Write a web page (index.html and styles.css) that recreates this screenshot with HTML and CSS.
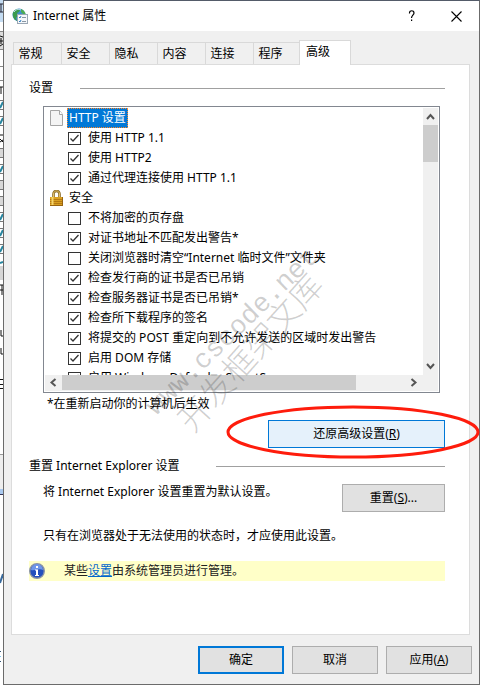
FILE: index.html
```html
<!DOCTYPE html>
<html lang="zh-CN">
<head>
<meta charset="utf-8">
<title>Internet 属性</title>
<link rel="stylesheet" href="styles.css">
</head>
<body>
<div class="desktop">
  <svg class="backdrop" width="3" height="685" aria-hidden="true">
    <rect width="3" height="685" fill="#fff"/>
    <rect width="3" height="22" fill="#c4dcf2"/>
    <path d="M0 4h3M1 4v8M0 12h3" stroke="#223" fill="none"/>
    <rect y="32" width="3" height="17" fill="#dcdcdc"/>
    <path d="M0 31.500h3M0 49.500h3M0 66.500h3M0 80.500h3" stroke="#888"/>
    <path d="M0 36l3 1M1 38v6M0 41h3M0 46l3-2M0 87h3M1 87v7M0 135h3M0 139l3 3M0 142l3-2" stroke="#111" fill="none"/>
    <path d="M0 148.500h3v9h-3zM0 180.500h3v9h-3zM0 196.500h3v9h-3z" fill="#d8d8d8"/>
    <path d="M0 100.500h3M0 109.500h3M0 116.500h3M0 125.500h3M0 148.500h3M0 157.500h3M0 164.500h3M0 173.500h3M0 180.500h3M0 189.500h3M0 196.500h3M0 205.500h3M0 212.500h3M0 221.500h3M0 228.500h3M0 237.500h3M0 244.500h3M0 253.500h3" stroke="#777"/>
    <path d="M0 108l3-6M0 124l3-6M0 172l3-6M0 220l3-6M0 236l3-6M0 252l3-6M0 263l3-1" stroke="#26859f" stroke-width="2"/>
    <rect y="266" width="3" height="14" fill="#d6d6d6"/>
    <path d="M0 285h3M2 285v10M0 290h3M1 330v6h2M1 348v6h2M0 379.500h3M0 384.500h3M0 388.500h3" stroke="#111" fill="none"/>
    <rect y="454" width="3" height="36" fill="#eee"/>
    <path d="M0 454.500h3" stroke="#999"/>
    <rect y="489" width="3" height="5" fill="#a9c9ef"/>
    <path d="M0 494.500h3" stroke="#335"/>
    <path d="M0 583l3-9" stroke="#37699c" stroke-width="2"/>
    <path d="M0 651.500h1M0 661.500h1" stroke="#357"/>
    <path d="M0 656.500h1" stroke="#7cc4ee"/>
  </svg>

  <main class="dialog">
    <header class="titlebar">
      <svg class="app-icon" width="16" height="16" viewBox="0 0 16 16" aria-hidden="true">
        <circle cx="7" cy="7" r="6.500" fill="#3f8fd0"/>
        <path d="M1 8C0 4 3 1 6 1l2 1-1 2-2 1 1 2-2 3 1 3C3 12 1 10 1 8z" fill="#3b9b4d"/>
        <path d="M9 1c3 1 4 3 4.500 5L11 6 9 4z" fill="#4fae50"/>
        <path d="M2 4c2-3 5-3 7-2" stroke="#c9e6f7" fill="none"/>
        <rect x="5.500" y="6.500" width="10" height="9" fill="#f5f8fb" stroke="#9aa7b4"/>
        <path d="M7 9l1 1 1-2M7 13l1 1 1-2" stroke="#2f7fc4" fill="none"/>
        <path d="M10 9.500h4M10 13.500h4" stroke="#8a96a3"/>
      </svg>
      <h1 class="title">Internet 属性</h1>
      <button class="caption-button" type="button" aria-label="帮助">
        <svg width="8" height="12" viewBox="0 0 8 12"><path d="M1.500 3.500V3C1.500 0 6 0 6 3c0 2-2.500 2.500-2.500 5" fill="none" stroke="#000" stroke-width="1.200"/><path d="M3 9.500h1.200V11H3z"/></svg>
      </button>
      <button class="caption-button" type="button" aria-label="关闭">
        <svg width="11" height="11" viewBox="0 0 11 11"><path d="M.5.5l10 10M10.500.5l-10 10" stroke="#000" stroke-width="1.100"/></svg>
      </button>
    </header>

    <div class="content">
      <nav class="tabs" role="tablist">
        <button class="tab" role="tab" type="button">常规</button>
        <button class="tab" role="tab" type="button">安全</button>
        <button class="tab" role="tab" type="button">隐私</button>
        <button class="tab" role="tab" type="button">内容</button>
        <button class="tab" role="tab" type="button">连接</button>
        <button class="tab" role="tab" type="button">程序</button>
        <button class="tab tab-active" role="tab" type="button" aria-selected="true">高级</button>
      </nav>

      <section class="panel" role="tabpanel">
        <h2 class="group-title group-settings">设置</h2>

        <div class="settings-box">
          <div class="viewport">
            <div class="category">
              <svg width="14" height="16" viewBox="0 0 14 16" aria-hidden="true"><path d="M.5.5h9l3 4v11H.5z" fill="#f4f4f4" stroke="#a5a5a5"/><path d="M9.500.5v4h3" fill="#fff" stroke="#a5a5a5"/></svg>
              <span class="category-name selected">HTTP 设置</span>
            </div>
            <label class="option"><input type="checkbox" checked>使用 HTTP 1.1</label>
            <label class="option"><input type="checkbox" checked>使用 HTTP2</label>
            <label class="option"><input type="checkbox" checked>通过代理连接使用 HTTP 1.1</label>
            <div class="category">
              <svg width="14" height="16" viewBox="0 0 14 16" aria-hidden="true"><path d="M3.500 8V4c0-4 6-4 6 0v4" fill="none" stroke="#8a6a24" stroke-width="2.600"/><path d="M3.500 8V4c0-4 6-4 6 0v4" fill="none" stroke="#e2c16a"/><rect y="7" width="13" height="9" fill="#d9a021"/><path d="M0 9.500h13M0 11.500h13M0 13.500h13" stroke="#b57a12"/><path d="M2.500 7v9" stroke="#f6d56b" stroke-width="2"/><path d="M0 15.500h13M12.500 7v9" stroke="#986410"/></svg>
              <span class="category-name">安全</span>
            </div>
            <label class="option"><input type="checkbox">不将加密的页存盘</label>
            <label class="option"><input type="checkbox" checked>对证书地址不匹配发出警告*</label>
            <label class="option"><input type="checkbox">关闭浏览器时清空“Internet 临时文件”文件夹</label>
            <label class="option"><input type="checkbox" checked>检查发行商的证书是否已吊销</label>
            <label class="option"><input type="checkbox" checked>检查服务器证书是否已吊销*</label>
            <label class="option"><input type="checkbox" checked>检查所下载程序的签名</label>
            <label class="option"><input type="checkbox" checked>将提交的 POST 重定向到不允许发送的区域时发出警告</label>
            <label class="option"><input type="checkbox" checked>启用 DOM 存储</label>
            <label class="option"><input type="checkbox" checked>启用 Windows Defender SmartScreen</label>
          </div>
          <div class="scroll-v" aria-hidden="true">
            <svg width="15" height="17"><path d="M4 11l3.500-4 3.500 4" class="arrow"/></svg>
            <div class="thumb-v"></div>
            <svg width="15" height="17"><path d="M4 6l3.500 4L11 6" class="arrow"/></svg>
          </div>
          <div class="scroll-h" aria-hidden="true">
            <svg width="17" height="15"><path d="M10.500 4l-4 3.500 4 3.500" class="arrow"/></svg>
            <div class="thumb-h"></div>
            <svg width="17" height="15"><path d="M6.500 4l4 3.500-4 3.500" class="arrow"/></svg>
          </div>
        </div>

        <p class="note">*在重新启动你的计算机后生效</p>

        <div class="restore-row">
          <button class="button button-restore" type="button">还原高级设置(<u>R</u>)</button>
          <svg class="ring" width="254" height="54" aria-hidden="true"><ellipse cx="127" cy="27" rx="125" ry="25" fill="none" stroke="#fe1c0c" stroke-width="3"/></svg>
        </div>

        <h2 class="group-title group-reset">重置 Internet Explorer 设置</h2>
        <div class="reset-row">
          <p class="reset-text">将 Internet Explorer 设置重置为默认设置。</p>
          <button class="button button-reset" type="button">重置(<u>S</u>)...</button>
        </div>
        <p class="advice">只有在浏览器处于无法使用的状态时，才应使用此设置。</p>

        <div class="managed">
          <svg width="16" height="16" viewBox="0 0 16 16" aria-hidden="true"><circle cx="8" cy="8" r="7.300" fill="#2450bd" stroke="#8b94a5" stroke-width="1.400"/><path d="M2 7a6 6 0 0 1 12 0C10 5 6 8 2 7z" fill="#6f96e8"/><path d="M7 3h2v2H7zM6 6.500h3V12h1v1H6v-1h1V7.500H6z" fill="#fff"/></svg>
          <p class="managed-text">某些<a href="#policy">设置</a>由系统管理员进行管理。</p>
        </div>
      </section>
    </div>

    <footer class="actions">
      <button class="button button-action button-default" type="button">确定</button>
      <button class="button button-action" type="button">取消</button>
      <button class="button button-action" type="button">应用(<u>A</u>)</button>
    </footer>

    <svg class="watermark" width="240" height="220" aria-hidden="true">
      <text class="mark-site" transform="translate(28 188) rotate(-44)">www.cscode.net</text>
      <text class="mark-name" transform="translate(65 206) rotate(-48)">开发框架文库</text>
    </svg>
  </main>
</div>
</body>
</html>
```
FILE: styles.css
```css
* {
  box-sizing: border-box;
}

body {
  margin: 0;
  background: #fff;
  color: #000;
  font: 12px/20px "Noto Sans", "Noto Sans CJK SC", sans-serif;
}

h1, h2, p {
  margin: 0;
  font-size: 12px;
  font-weight: 400;
}

button {
  padding: 0;
  border: 0;
  color: inherit;
  font: inherit;
}

svg {
  display: block;
  flex: none;
}

.desktop {
  display: flex;
  padding-right: 2px;
}

.backdrop {
  flex: none;
}

.dialog {
  position: relative;
  flex: 1;
  min-width: 0;
  border: 1px solid #6b6b6b;
  border-top-color: #535b69;
  background: #f0f0f0;
}

.titlebar {
  display: flex;
  align-items: center;
  height: 30px;
  padding-left: 8px;
  background: #fff;
}

.title {
  flex: 1;
  margin-left: 5px;
}

.caption-button {
  display: flex;
  align-items: center;
  justify-content: center;
  width: 45px;
  height: 30px;
  background: transparent;
}

.content {
  padding: 9px 9px 0 7px;
}

.tabs {
  display: flex;
  align-items: flex-end;
  padding-left: 2px;
}

.tab {
  width: 48px;
  height: 22px;
  padding-right: 14px;
  border: 1px solid #d9d9d9;
  border-width: 1px 0 0 1px;
  background: #f0f0f0;
}

.tab-active {
  position: relative;
  width: 52px;
  height: 25px;
  margin: 0 0 -1px -2px;
  padding: 0 14px 3px 0;
  border-width: 1px 1px 0;
  background: #fff;
}

.panel {
  padding: 13px 24px 53px 17px;
  border: 1px solid #dcdcdc;
  background: #fff;
}

.group-title {
  display: flex;
  align-items: center;
}

.group-title::after {
  content: "";
  flex: 1;
  height: 1px;
  background: #a0a0a0;
}

.group-settings::after {
  margin-left: 27px;
}

.group-reset::after {
  margin-left: 36px;
}

.settings-box {
  display: grid;
  grid-template-columns: 1fr 15px;
  grid-template-rows: 267px 16px;
  margin: 8px 5px 0 14px;
  padding: 1px;
  border: 1px solid #828790;
}

.viewport {
  min-width: 0;
  overflow: hidden;
  white-space: nowrap;
}

.category {
  display: flex;
  align-items: center;
  gap: 3px;
  height: 20px;
  padding-left: 5px;
}

.category-name {
  padding: 0 1px;
  line-height: 18px;
  border: 1px solid transparent;
}

.selected {
  border: 1px dotted #ff8728;
  background: #0078d7;
  color: #fff;
}

.option {
  display: flex;
  align-items: center;
  gap: 7px;
  height: 20px;
  padding-left: 23px;
}

.option input {
  appearance: none;
  flex: none;
  width: 13px;
  height: 13px;
  margin: 0;
  border: 1px solid #333;
  background: #fff;
}

.option input:checked {
  background: url("data:image/svg+xml,%3Csvg xmlns='http://www.w3.org/2000/svg' width='11' height='11'%3E%3Cpath d='M1.500 5.500l2.500 2.500 5.500-6' fill='none' stroke='%23333' stroke-width='1.300'/%3E%3C/svg%3E");
}

.scroll-v {
  display: flex;
  flex-direction: column;
  justify-content: space-between;
  background: #f0f0f0;
}

.thumb-v {
  height: 37px;
  margin-bottom: auto;
  background: #cdcdcd;
}

.scroll-h {
  display: flex;
  grid-column: 1 / 3;
  padding-right: 16px;
  background: #f0f0f0;
}

.thumb-h {
  flex: 1;
  height: 15px;
  margin-right: 49px;
  background: #cdcdcd;
}

.arrow {
  fill: none;
  stroke: #555;
  stroke-width: 2;
}

.note {
  margin: 1px 0 0 18px;
}

.restore-row {
  position: relative;
  display: flex;
  justify-content: flex-end;
  margin-top: 6px;
}

.button {
  border: 1px solid #adadad;
  background: #e1e1e1;
  height: 28px;
}

.button-restore {
  width: 177px;
  border-color: #0078d7;
  background: #e5f1fb;
}

.ring {
  position: absolute;
  top: -15px;
  right: -35px;
}

.group-reset {
  margin-top: 8px;
}

.reset-row {
  display: flex;
  justify-content: space-between;
  align-items: flex-start;
  margin-top: 6px;
  padding-left: 14px;
}

.button-reset {
  width: 103px;
  margin-top: 2px;
}

.advice {
  margin: 14px 0 0 14px;
}

.managed {
  display: flex;
  align-items: center;
  gap: 19px;
  margin-top: 15px;
  background: #ffffc8;
  color: #222;
}

.managed a {
  color: #0066cc;
}

.actions {
  display: flex;
  justify-content: flex-end;
  gap: 8px;
  padding: 11px 7px 9px;
}

.button-action {
  width: 86px;
}

.button-default {
  border: 2px solid #0078d7;
}

.watermark {
  position: absolute;
  top: 227px;
  left: 124px;
  pointer-events: none;
}

.watermark text {
  fill: rgba(40, 40, 40, 0.22);
}

.mark-site {
  font-family: "Liberation Mono", monospace;
  font-size: 27px;
}

.mark-name {
  font-family: "Noto Sans CJK SC", sans-serif;
  font-size: 33px;
  font-weight: 300;
}
```
